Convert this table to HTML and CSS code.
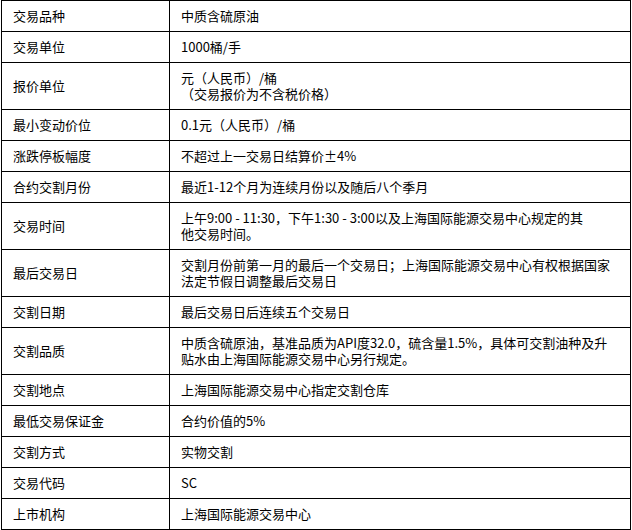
FILE: index.html
```html
<!DOCTYPE html>
<html lang="zh-CN">
<head>
<meta charset="utf-8">
<title>原油期货合约</title>
<link rel="stylesheet" href="styles.css">
</head>
<body>
<table class="spec">
  <colgroup><col class="col-name"><col class="col-value"></colgroup>
  <tbody>
    <tr><td>交易品种</td><td>中质含硫原油</td></tr>
    <tr><td>交易单位</td><td>1000桶/手</td></tr>
    <tr><td>报价单位</td><td>元（人民币）/桶<br>（交易报价为不含税价格）</td></tr>
    <tr><td>最小变动价位</td><td>0.1元（人民币）/桶</td></tr>
    <tr><td>涨跌停板幅度</td><td>不超过上一交易日结算价±4%</td></tr>
    <tr><td>合约交割月份</td><td>最近1-12个月为连续月份以及随后八个季月</td></tr>
    <tr><td>交易时间</td><td>上午9:00 - 11:30，下午1:30 - 3:00以及上海国际能源交易中心规定的其<br>他交易时间。</td></tr>
    <tr><td>最后交易日</td><td>交割月份前第一月的最后一个交易日；上海国际能源交易中心有权根据国家<br>法定节假日调整最后交易日</td></tr>
    <tr><td>交割日期</td><td>最后交易日后连续五个交易日</td></tr>
    <tr><td>交割品质</td><td>中质含硫原油，基准品质为API度32.0，硫含量1.5%，具体可交割油种及升<br>贴水由上海国际能源交易中心另行规定。</td></tr>
    <tr><td>交割地点</td><td>上海国际能源交易中心指定交割仓库</td></tr>
    <tr><td>最低交易保证金</td><td>合约价值的5%</td></tr>
    <tr><td>交割方式</td><td>实物交割</td></tr>
    <tr><td>交易代码</td><td>SC</td></tr>
    <tr><td>上市机构</td><td>上海国际能源交易中心</td></tr>
  </tbody>
</table>
</body>
</html>
```

FILE: styles.css
```css
html, body {
  margin: 0;
  padding: 0;
  background: #fff;
}
body {
  padding: 0 0 0 1px;
  font-family: "Noto Sans CJK SC", "DejaVu Sans", sans-serif;
  font-size: 13px;
  color: #000;
}
.spec {
  border-collapse: collapse;
  width: 630px;
  table-layout: fixed;
}
.col-name { width: 168px; }
.spec td {
  border: 1px solid #000;
  padding: 7px 8px 7px 11px;
  line-height: 16px;
  vertical-align: middle;
  text-align: left;
}
```
